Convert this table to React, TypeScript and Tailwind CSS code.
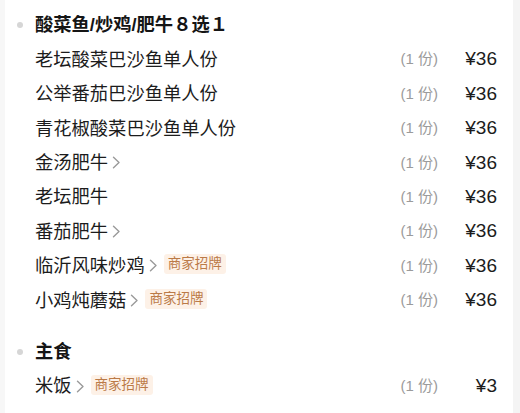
type Item = { name: string; qty: string; price: string; more?: boolean; badge?: boolean };

const sections: { title: string; items: Item[] }[] = [
  {
    title: "酸菜鱼/炒鸡/肥牛８选１",
    items: [
      { name: "老坛酸菜巴沙鱼单人份", qty: "(1 份)", price: "¥36" },
      { name: "公举番茄巴沙鱼单人份", qty: "(1 份)", price: "¥36" },
      { name: "青花椒酸菜巴沙鱼单人份", qty: "(1 份)", price: "¥36" },
      { name: "金汤肥牛", qty: "(1 份)", price: "¥36", more: true },
      { name: "老坛肥牛", qty: "(1 份)", price: "¥36" },
      { name: "番茄肥牛", qty: "(1 份)", price: "¥36", more: true },
      { name: "临沂风味炒鸡", qty: "(1 份)", price: "¥36", more: true, badge: true },
      { name: "小鸡炖蘑菇", qty: "(1 份)", price: "¥36", more: true, badge: true },
    ],
  },
  {
    title: "主食",
    items: [{ name: "米饭", qty: "(1 份)", price: "¥3", more: true, badge: true }],
  },
];

function Chevron() {
  return (
    <svg width="9" height="13" viewBox="0 0 9 13" className="ml-[4px] shrink-0" fill="none">
      <path d="M1.5 1.2 L7 6.5 L1.5 11.8" stroke="#9a9a9a" strokeWidth="1.4" strokeLinecap="round" strokeLinejoin="round" />
    </svg>
  );
}

export default function App() {
  return (
    <div
      className="flex h-[413px] w-[520px] overflow-hidden bg-white"
      style={{ fontFamily: '"Liberation Sans", "Noto Sans CJK SC", sans-serif' }}
    >
      <div className="w-[5px] shrink-0 bg-[#f7f7f7]" />
      <div className="flex flex-1 flex-col pt-[8px] pl-[12px] pr-[16px]">
        {sections.map((section, si) => (
          <div key={section.title} className={si > 0 ? "mt-[17px]" : ""}>
            {/* Section header */}
            <div className="flex h-[34.4px] items-center gap-[12px]">
              <span className="h-[6px] w-[6px] shrink-0 rounded-full bg-[#d6d6d6]" />
              <span className="text-[18.3px] font-bold text-[#151515]">{section.title}</span>
            </div>

            {section.items.map((item) => (
              <div key={item.name} className="flex h-[34.4px] items-center pl-[18px]">
                <div className="flex min-w-0 flex-1 items-center">
                  <span className="text-[18.3px] text-[#1c1c1c]">{item.name}</span>
                  {item.more && <Chevron />}
                  {item.badge && (
                    <span className="ml-[6px] -mt-[3px] rounded-[3px] bg-[#fdf1e7] px-[4px] py-[1px] text-[13.5px] leading-[18px] text-[#bb7a47]">
                      商家招牌
                    </span>
                  )}
                </div>
                <span className="text-[15px] text-[#9b9b9b]">{item.qty}</span>
                <span className="w-[59px] text-right text-[19px] text-[#1c1c1c]">{item.price}</span>
              </div>
            ))}
          </div>
        ))}
      </div>
      <div className="w-[7px] shrink-0 bg-[#f4f4f4]" />
    </div>
  );
}
